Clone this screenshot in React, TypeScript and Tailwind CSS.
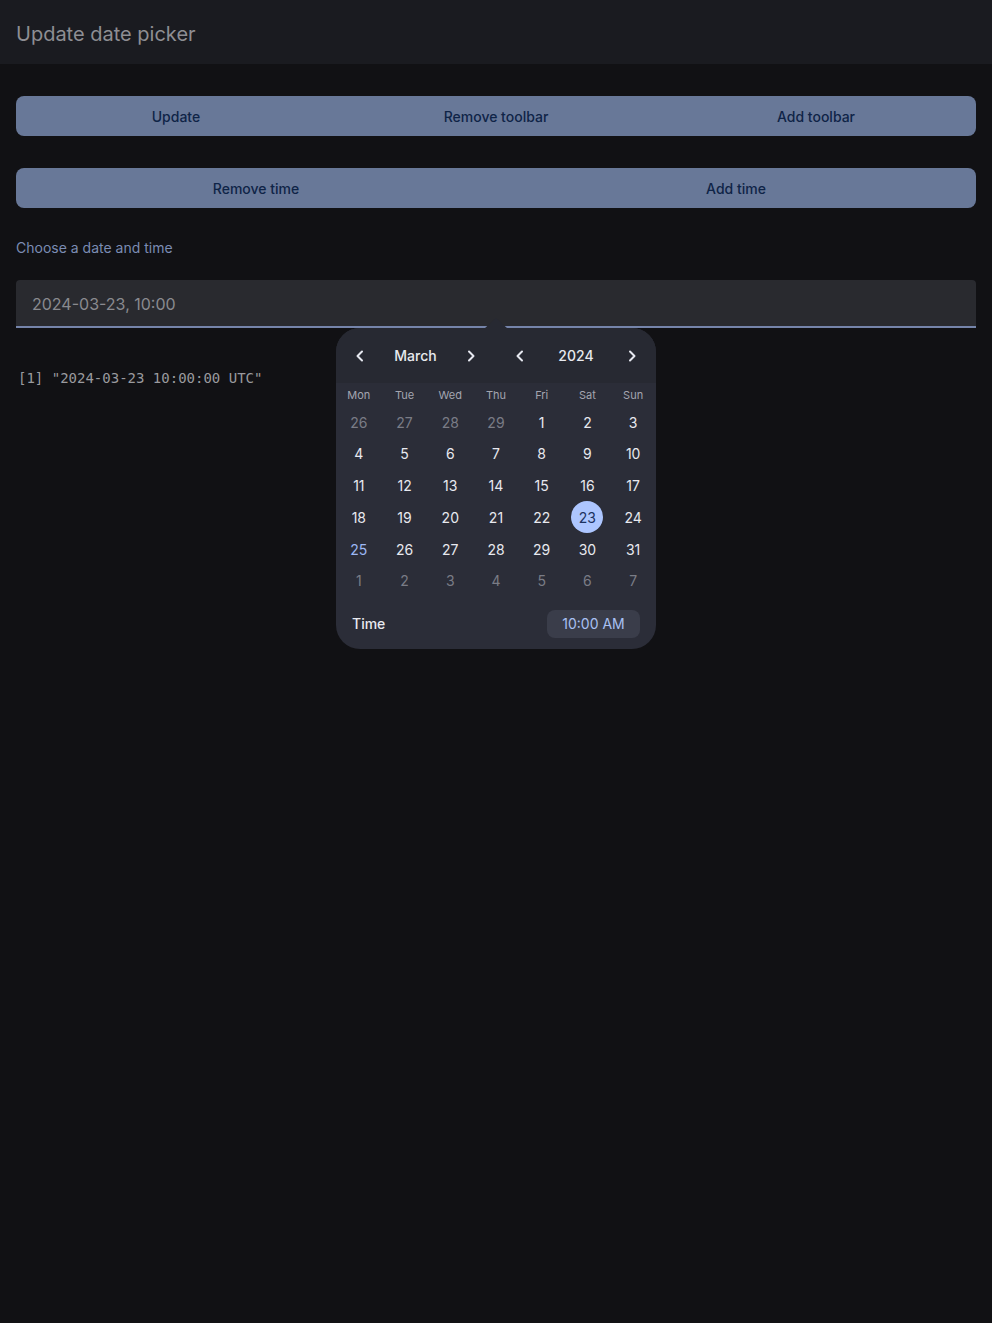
import React from "react";

const Chev = ({ dir }: { dir: "l" | "r" }) => (
  <svg width="16" height="16" viewBox="0 0 16 16" fill="none">
    <path
      d={dir === "l" ? "M10 3.5 L5.5 8 L10 12.5" : "M6 3.5 L10.5 8 L6 12.5"}
      stroke="#e6e8f0"
      strokeWidth="2"
      strokeLinecap="round"
      strokeLinejoin="round"
    />
  </svg>
);

const days = ["Mon", "Tue", "Wed", "Thu", "Fri", "Sat", "Sun"];
type Cell = { n: number; muted?: boolean; sel?: boolean; today?: boolean };
const weeks: Cell[][] = [
  [{ n: 26, muted: true }, { n: 27, muted: true }, { n: 28, muted: true }, { n: 29, muted: true }, { n: 1 }, { n: 2 }, { n: 3 }],
  [4, 5, 6, 7, 8, 9, 10].map((n) => ({ n })),
  [11, 12, 13, 14, 15, 16, 17].map((n) => ({ n })),
  [{ n: 18 }, { n: 19 }, { n: 20 }, { n: 21 }, { n: 22 }, { n: 23, sel: true }, { n: 24 }],
  [{ n: 25, today: true }, { n: 26 }, { n: 27 }, { n: 28 }, { n: 29 }, { n: 30 }, { n: 31 }],
  [1, 2, 3, 4, 5, 6, 7].map((n) => ({ n, muted: true })),
];

export default function App() {
  return (
    <div
      className="min-h-[1323px] w-full bg-[#111114]"
      style={{ fontFamily: "Inter, 'Noto Sans', sans-serif" }}
    >
      <div className="h-16 bg-[#1a1b20] flex items-center px-4 pt-[3px]">
        <h1 className="text-[20px] text-[#8e8e93] font-normal">Update date picker</h1>
      </div>
      <div className="px-4 pt-8">
        <div className="grid grid-cols-3 h-10 rounded-lg bg-[#687898] text-[14px] font-medium text-[#0f2447]">
          <button className="flex items-center justify-center">Update</button>
          <button className="flex items-center justify-center">Remove toolbar</button>
          <button className="flex items-center justify-center">Add toolbar</button>
        </div>
        <div className="mt-8 grid grid-cols-2 h-10 rounded-lg bg-[#687898] text-[14px] font-medium text-[#0f2447]">
          <button className="flex items-center justify-center">Remove time</button>
          <button className="flex items-center justify-center">Add time</button>
        </div>
        <div className="mt-[30px] text-[14px] text-[#7b8cb3] leading-5">Choose a date and time</div>
        <div className="relative mt-[22px]">
          <div className="h-12 rounded-t bg-[#292a2f] border-b-2 border-[#7584aa] flex items-center px-4 pt-[2px] text-[16px] text-[#8a8a8f]">
            2024-03-23, 10:00
          </div>
          <div
            className="pt-[40px] text-[14px] text-[#9a9a9e] pl-[2px]"
            style={{ fontFamily: "'DejaVu Sans Mono', 'Liberation Mono', monospace" }}
          >
            [1] "2024-03-23 10:00:00 UTC"
          </div>
          {/* popover */}
          <div className="absolute left-[320px] top-[48px] w-[320px] rounded-[24px] bg-[#2b2d38]">
            <div className="absolute left-1/2 -translate-x-1/2 -top-[10px] w-0 h-0 border-l-[12px] border-r-[12px] border-b-[11px] border-l-transparent border-r-transparent border-b-[#272932]" />
            <div className="h-[55px] rounded-t-[24px] bg-[#272932] grid grid-cols-2 text-[14px] font-medium text-[#e8e9ef]">
              <div className="flex items-center justify-between pl-4 pr-[17px]">
                <Chev dir="l" />
                <span>March</span>
                <Chev dir="r" />
              </div>
              <div className="flex items-center justify-between pl-4 pr-4">
                <Chev dir="l" />
                <span>2024</span>
                <Chev dir="r" />
              </div>
            </div>
            <div className="grid grid-cols-7 pt-[5px] pb-[2px] text-[11px] text-[#a3a5b0]">
              {days.map((d) => (
                <div key={d} className="h-[14px] flex items-center justify-center">{d}</div>
              ))}
            </div>
            <div className="pt-[2px]">
              {weeks.map((w, i) => (
                <div key={i} className="grid grid-cols-7 h-[31.8px]">
                  {w.map((c, j) => (
                    <div key={j} className="flex items-center justify-center">
                      <div
                        className={
                          "w-8 h-8 rounded-full flex items-center justify-center text-[14px] " +
                          (c.sel
                            ? "bg-[#adc6ff] text-[#1c3260]"
                            : c.today
                            ? "text-[#9db8f5]"
                            : c.muted
                            ? "text-[#7a7c86]"
                            : "text-[#e8e9ef]")
                        }
                      >
                        {c.n}
                      </div>
                    </div>
                  ))}
                </div>
              ))}
            </div>
            <div className="flex items-center justify-between pl-4 pr-4 pt-[13px] pb-[11px]">
              <span className="text-[14px] font-medium text-[#e8e9ef]">Time</span>
              <div className="h-7 w-[93px] rounded-lg bg-[#3a3d4a] flex items-center justify-center text-[14px] text-[#a8c0f2]">
                10:00 AM
              </div>
            </div>
          </div>
        </div>
      </div>
    </div>
  );
}
